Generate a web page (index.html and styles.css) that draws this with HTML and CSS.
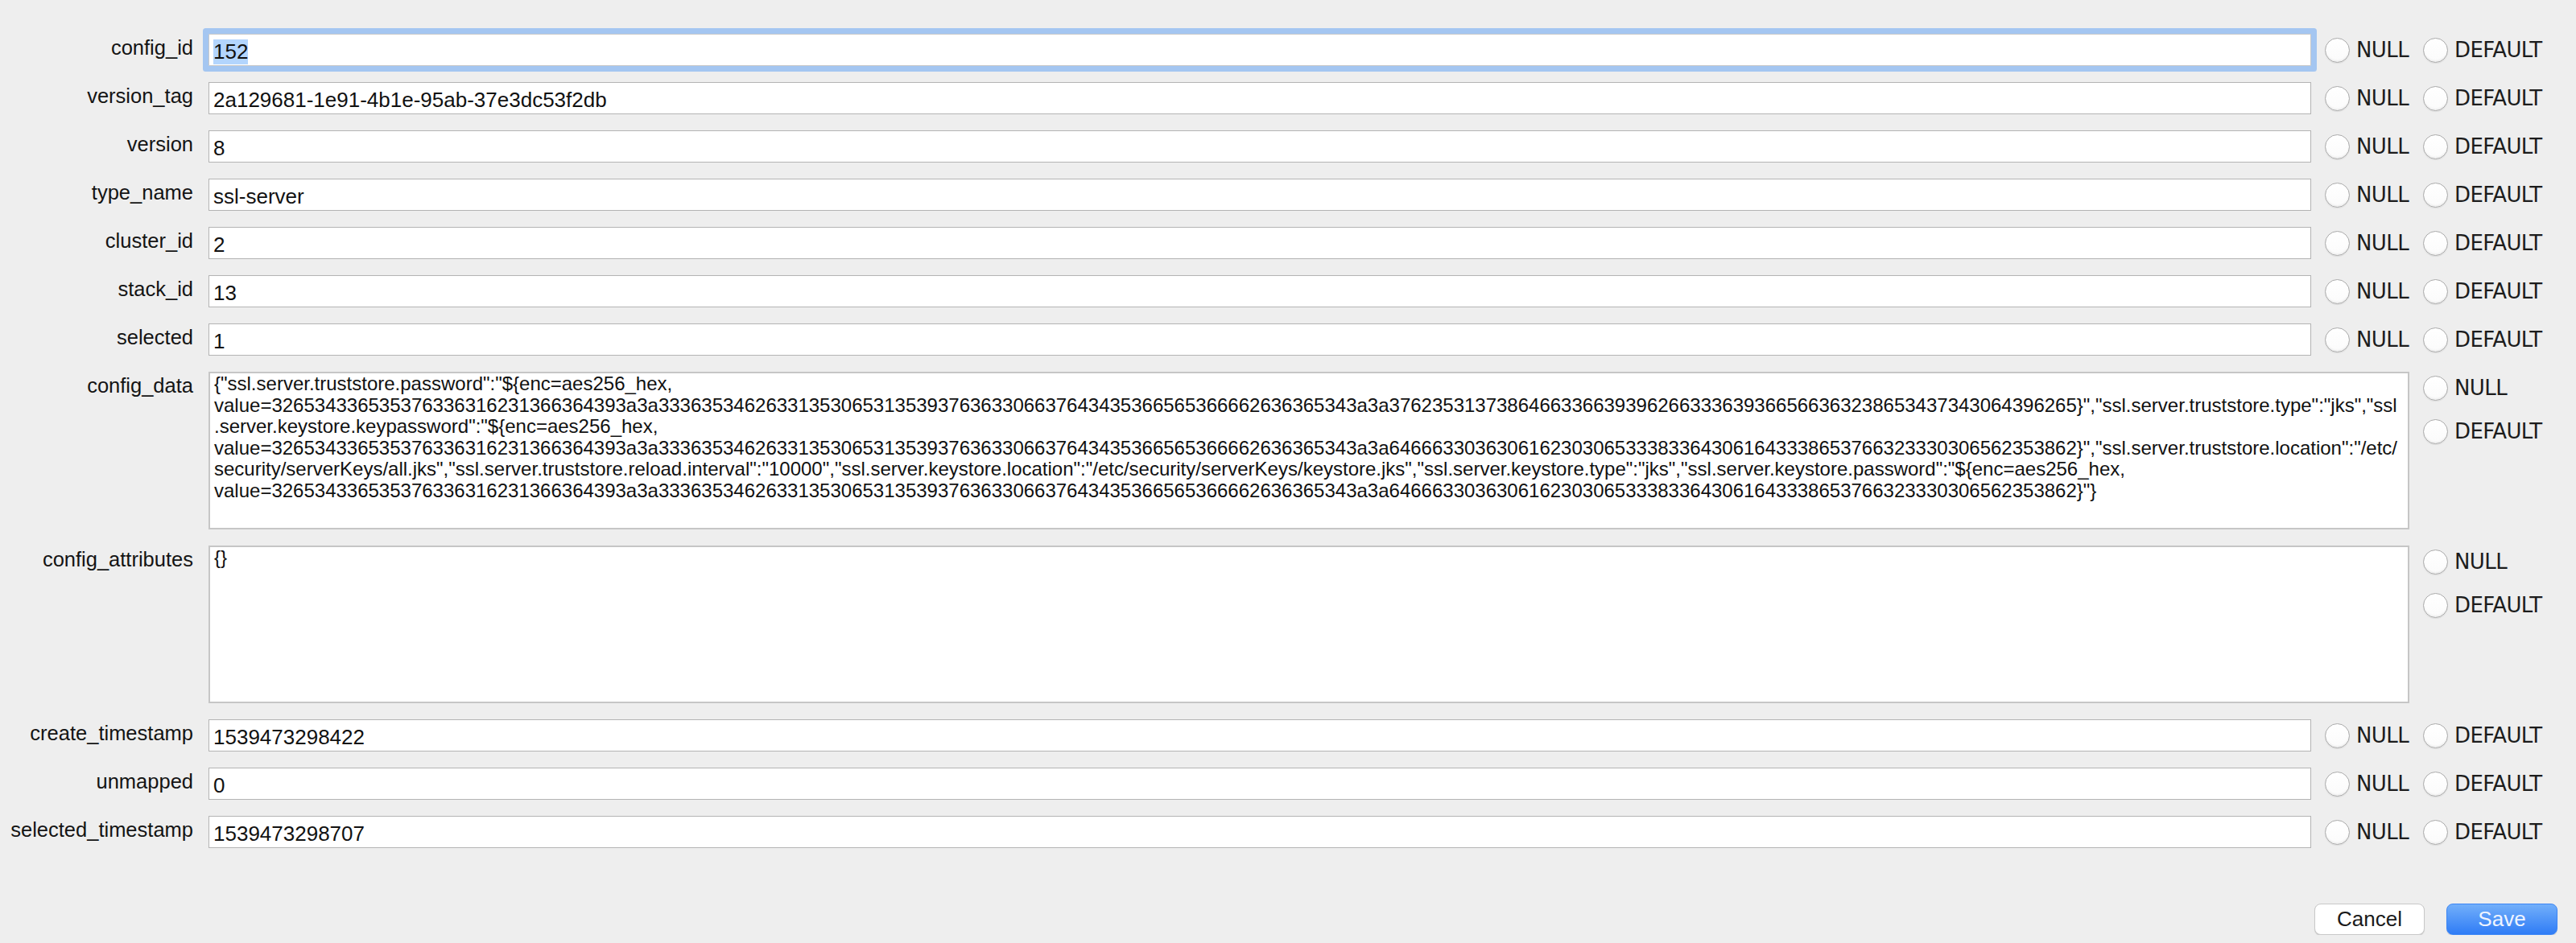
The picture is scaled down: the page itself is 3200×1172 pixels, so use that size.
FILE: index.html
```html
<!DOCTYPE html>
<html lang="en">
<head>
    <meta charset="UTF-8">
    <meta name="viewport" content="width=device-width, initial-scale=1.0">
    <title>Edit Row</title>
    <link rel="stylesheet" href="styles.css">
</head>
<body>

    <form class="editor" id="rowForm">
        <div class="row">
            <label class="name" for="config_id">config_id</label>
            <input class="value" type="text" id="config_id" name="config_id" value="152">
            <div class="opts">
                <label class="opt null"><input type="radio" name="config_id_flag" value="null"><span>NULL</span></label>
                <label class="opt"><input type="radio" name="config_id_flag" value="default"><span>DEFAULT</span></label>
            </div>
        </div>

        <div class="row">
            <label class="name" for="version_tag">version_tag</label>
            <input class="value" type="text" id="version_tag" name="version_tag" value="2a129681-1e91-4b1e-95ab-37e3dc53f2db">
            <div class="opts">
                <label class="opt null"><input type="radio" name="version_tag_flag" value="null"><span>NULL</span></label>
                <label class="opt"><input type="radio" name="version_tag_flag" value="default"><span>DEFAULT</span></label>
            </div>
        </div>

        <div class="row">
            <label class="name" for="version">version</label>
            <input class="value" type="text" id="version" name="version" value="8">
            <div class="opts">
                <label class="opt null"><input type="radio" name="version_flag" value="null"><span>NULL</span></label>
                <label class="opt"><input type="radio" name="version_flag" value="default"><span>DEFAULT</span></label>
            </div>
        </div>

        <div class="row">
            <label class="name" for="type_name">type_name</label>
            <input class="value" type="text" id="type_name" name="type_name" value="ssl-server">
            <div class="opts">
                <label class="opt null"><input type="radio" name="type_name_flag" value="null"><span>NULL</span></label>
                <label class="opt"><input type="radio" name="type_name_flag" value="default"><span>DEFAULT</span></label>
            </div>
        </div>

        <div class="row">
            <label class="name" for="cluster_id">cluster_id</label>
            <input class="value" type="text" id="cluster_id" name="cluster_id" value="2">
            <div class="opts">
                <label class="opt null"><input type="radio" name="cluster_id_flag" value="null"><span>NULL</span></label>
                <label class="opt"><input type="radio" name="cluster_id_flag" value="default"><span>DEFAULT</span></label>
            </div>
        </div>

        <div class="row">
            <label class="name" for="stack_id">stack_id</label>
            <input class="value" type="text" id="stack_id" name="stack_id" value="13">
            <div class="opts">
                <label class="opt null"><input type="radio" name="stack_id_flag" value="null"><span>NULL</span></label>
                <label class="opt"><input type="radio" name="stack_id_flag" value="default"><span>DEFAULT</span></label>
            </div>
        </div>

        <div class="row">
            <label class="name" for="selected">selected</label>
            <input class="value" type="text" id="selected" name="selected" value="1">
            <div class="opts">
                <label class="opt null"><input type="radio" name="selected_flag" value="null"><span>NULL</span></label>
                <label class="opt"><input type="radio" name="selected_flag" value="default"><span>DEFAULT</span></label>
            </div>
        </div>

        <div class="row">
            <label class="name" for="config_data">config_data</label>
            <textarea class="value" id="config_data" name="config_data" spellcheck="false">{"ssl.server.truststore.password":"${enc=aes256_hex,
value=326534336535376336316231366364393a3a33363534626331353065313539376363306637643435366565366662636365343a3a3762353137386466336639396266333639366566363238653437343064396265}","ssl.server.truststore.type":"jks","ssl
.server.keystore.keypassword":"${enc=aes256_hex,
value=326534336535376336316231366364393a3a33363534626331353065313539376363306637643435366565366662636365343a3a6466633036306162303065333833643061643338653766323330306562353862}","ssl.server.truststore.location":"/etc/
security/serverKeys/all.jks","ssl.server.truststore.reload.interval":"10000","ssl.server.keystore.location":"/etc/security/serverKeys/keystore.jks","ssl.server.keystore.type":"jks","ssl.server.keystore.password":"${enc=aes256_hex,
value=326534336535376336316231366364393a3a33363534626331353065313539376363306637643435366565366662636365343a3a6466633036306162303065333833643061643338653766323330306562353862}"}</textarea>
            <div class="opts stack">
                <label class="opt"><input type="radio" name="config_data_flag" value="null"><span>NULL</span></label>
                <label class="opt"><input type="radio" name="config_data_flag" value="default"><span>DEFAULT</span></label>
            </div>
        </div>

        <div class="row">
            <label class="name" for="config_attributes">config_attributes</label>
            <textarea class="value" id="config_attributes" name="config_attributes" spellcheck="false">{}</textarea>
            <div class="opts stack">
                <label class="opt"><input type="radio" name="config_attributes_flag" value="null"><span>NULL</span></label>
                <label class="opt"><input type="radio" name="config_attributes_flag" value="default"><span>DEFAULT</span></label>
            </div>
        </div>

        <div class="row">
            <label class="name" for="create_timestamp">create_timestamp</label>
            <input class="value" type="text" id="create_timestamp" name="create_timestamp" value="1539473298422">
            <div class="opts">
                <label class="opt null"><input type="radio" name="create_timestamp_flag" value="null"><span>NULL</span></label>
                <label class="opt"><input type="radio" name="create_timestamp_flag" value="default"><span>DEFAULT</span></label>
            </div>
        </div>

        <div class="row">
            <label class="name" for="unmapped">unmapped</label>
            <input class="value" type="text" id="unmapped" name="unmapped" value="0">
            <div class="opts">
                <label class="opt null"><input type="radio" name="unmapped_flag" value="null"><span>NULL</span></label>
                <label class="opt"><input type="radio" name="unmapped_flag" value="default"><span>DEFAULT</span></label>
            </div>
        </div>

        <div class="row">
            <label class="name" for="selected_timestamp">selected_timestamp</label>
            <input class="value" type="text" id="selected_timestamp" name="selected_timestamp" value="1539473298707">
            <div class="opts">
                <label class="opt null"><input type="radio" name="selected_timestamp_flag" value="null"><span>NULL</span></label>
                <label class="opt"><input type="radio" name="selected_timestamp_flag" value="default"><span>DEFAULT</span></label>
            </div>
        </div>

        <div class="actions">
            <button type="button" class="btn">Cancel</button>
            <button type="submit" class="btn btn-primary">Save</button>
        </div>
    </form>

    <script src="main.js"></script>
</body>
</html>
```

FILE: styles.css
```css
body {
    margin: 0;
    padding: 0;
    background-color: #eeeeee;
    font-family: "Liberation Sans", Arial, sans-serif;
    color: #111;
}

.editor {
    display: flex;
    flex-direction: column;
    gap: 20px;
    padding: 42px 17px 0 0;
}

.row {
    display: flex;
    align-items: flex-start;
}

.name {
    width: 240px;
    flex-shrink: 0;
    margin-right: 19px;
    padding-top: 4px;
    text-align: right;
    font-size: 25.5px;
    line-height: 26px;
    color: #141414;
}

input.value {
    flex: 1;
    min-width: 0;
    height: 40px;
    box-sizing: border-box;
    margin: 0;
    padding: 4px 5px 0;
    border: 1px solid #b4b4b4;
    border-radius: 0;
    background: #fff;
    font-family: "Liberation Sans", Arial, sans-serif;
    font-size: 26px;
    color: #111;
}

input.value:focus {
    outline: none;
    border-color: #c9c9c9;
    border-radius: 1px;
    box-shadow: 0 0 0 7px #a4c6f1;
}

input.value::selection {
    background: #b3d5fd;
    color: #111;
}

textarea.value {
    flex: 1;
    min-width: 0;
    height: 196px;
    box-sizing: border-box;
    margin: 0;
    padding: 0 5px;
    border: 2px solid #c6c6c6;
    background: #fff;
    font-family: "Liberation Sans", Arial, sans-serif;
    font-size: 24px;
    line-height: 26.6px;
    color: #111;
    white-space: pre;
    overflow: hidden;
    resize: none;
}

textarea.value:focus {
    outline: none;
}

/* NULL / DEFAULT choices */
.opts {
    width: 295px;
    flex-shrink: 0;
    margin-left: 17px;
    height: 40px;
    display: flex;
    align-items: center;
}

.opts.stack {
    width: 173px;
    height: auto;
    flex-direction: column;
    align-items: flex-start;
    gap: 23px;
    padding-top: 5px;
}

.opt {
    display: flex;
    align-items: center;
    gap: 8px;
    font-family: "DejaVu Sans", "Liberation Sans", sans-serif;
    font-size: 26px;
    letter-spacing: -0.6px;
    line-height: 31px;
    color: #1c1c1c;
}

.opt.null {
    width: 122px;
}

.opt input[type="radio"] {
    appearance: none;
    -webkit-appearance: none;
    width: 31px;
    height: 31px;
    margin: 0;
    border: 1px solid #ababab;
    border-radius: 50%;
    background: linear-gradient(#ffffff, #fbfbfb);
    box-shadow: inset 0 -2px 2px rgba(0, 0, 0, 0.05), 0 1px 1px rgba(0, 0, 0, 0.08);
}

.actions {
    display: flex;
    justify-content: flex-end;
    gap: 27px;
    margin-top: 49px;
    padding-right: 6px;
}

.btn {
    height: 39px;
    width: 137px;
    box-sizing: border-box;
    border: 1px solid #c9c9c9;
    border-radius: 8px;
    background: #fff;
    box-shadow: 0 1px 1px rgba(0, 0, 0, 0.15);
    font-family: "Liberation Sans", Arial, sans-serif;
    font-size: 26px;
    color: #1a1a1a;
    padding: 0;
}

.btn-primary {
    width: 138px;
    border-color: #3c86f5;
    background: linear-gradient(#72affa, #2f7cf6);
    color: #eef4ff;
}
```

FILE: main.js
```javascript
// start with the first field focused and its value selected
var first = document.getElementById('config_id');
first.focus();
first.select();
```
